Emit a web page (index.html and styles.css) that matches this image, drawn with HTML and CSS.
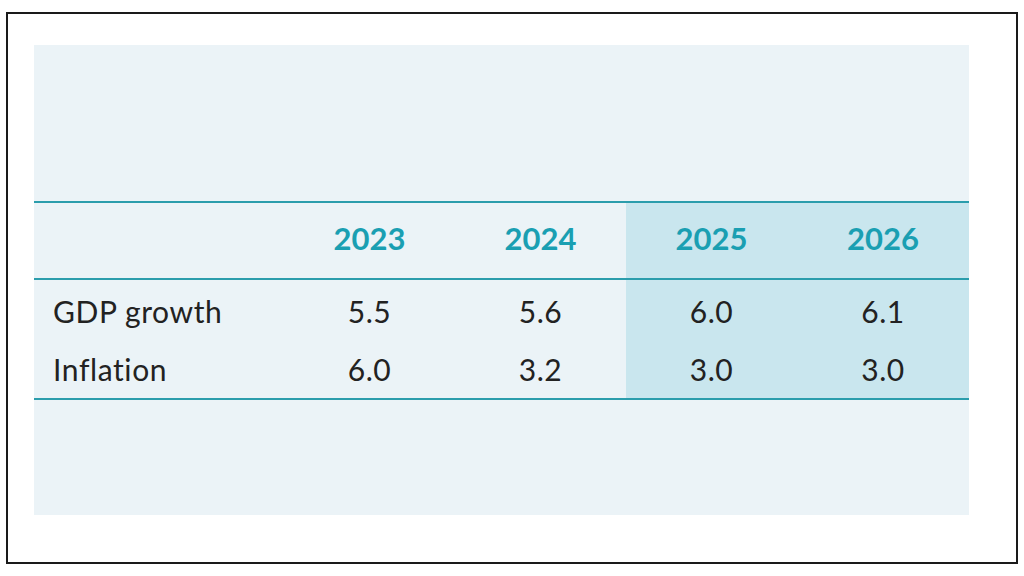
FILE: index.html
```html
<!DOCTYPE html>
<html lang="en">
<head>
<meta charset="utf-8">
<title>Forecast table</title>
<link rel="stylesheet" href="styles.css">
</head>
<body>
<div class="frame">
  <div class="panel">
    <div class="table">
      <div class="row head">
        <div class="cell label"></div>
        <div class="cell">2023</div>
        <div class="cell">2024</div>
        <div class="cell hl">2025</div>
        <div class="cell hl">2026</div>
      </div>
      <div class="body">
        <div class="row">
          <div class="cell label">GDP growth</div>
          <div class="cell">5.5</div>
          <div class="cell">5.6</div>
          <div class="cell hl">6.0</div>
          <div class="cell hl">6.1</div>
        </div>
        <div class="row">
          <div class="cell label">Inflation</div>
          <div class="cell">6.0</div>
          <div class="cell">3.2</div>
          <div class="cell hl">3.0</div>
          <div class="cell hl">3.0</div>
        </div>
      </div>
    </div>
  </div>
</div>
</body>
</html>
```
FILE: styles.css
```css
html, body {
  margin: 0;
  padding: 0;
  background: #ffffff;
}
body {
  font-family: Lato, "Open Sans", sans-serif;
}
.frame {
  box-sizing: border-box;
  margin: 12px 0 0 6px;
  width: 1012px;
  height: 552px;
  border: 2px solid #1a1a1a;
  padding: 31px 0 0 26px;
}
.panel {
  width: 935px;
  height: 470px;
  background: #ebf3f7;
  padding-top: 156px;
  box-sizing: border-box;
}
.table {
  display: flex;
  flex-direction: column;
}
.row {
  display: grid;
  grid-template-columns: 250px 171px 171px 171px 172px;
}
.head {
  border-top: 2px solid #2b9dac;
  border-bottom: 2px solid #2b9dac;
}
.head .cell {
  height: 75px;
  padding-bottom: 6px;
  box-sizing: border-box;
  color: #1a9fb2;
  font-weight: 700;
  font-size: 31px;
}
.body {
  border-bottom: 2px solid #2b9dac;
}
.body .row .cell {
  height: 58px;
  color: #222222;
  font-size: 30px;
  font-weight: 400;
  letter-spacing: 0.6px;
}
.body .row:first-child .cell {
  padding-top: 2px;
}
.cell {
  display: flex;
  align-items: center;
  justify-content: center;
}
.cell.label {
  justify-content: flex-start;
  padding-left: 19px;
}
.hl {
  background: #c9e6ee;
}
```
